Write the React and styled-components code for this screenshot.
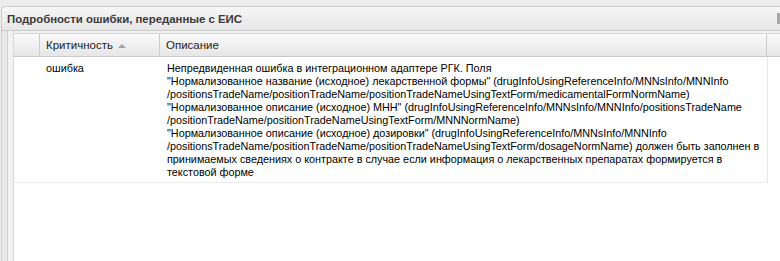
import React from "react";
import styled, { createGlobalStyle } from "styled-components";

const Global = createGlobalStyle`
  html, body { margin: 0; padding: 0; background: #ffffff; }
  body { font-family: "Liberation Sans", Arial, sans-serif; }
  #root { width: 780px; height: 261px; overflow: hidden; }
`;

const Page = styled.div`
  width: 780px;
  height: 261px;
  display: flex;
  flex-direction: column;
  background: #efefef;
  overflow: hidden;
`;

const TopStrip = styled.div`
  height: 6px;
  flex: none;
  background: #ececec;
`;

const Panel = styled.div`
  flex: 1;
  display: flex;
  flex-direction: column;
  margin-left: 1px;
  min-height: 0;
`;

const PanelHeader = styled.div`
  height: 23px;
  flex: none;
  display: flex;
  align-items: center;
  border: 1px solid #c9c9c9;
  border-right: none;
  border-top-left-radius: 4px;
  background: linear-gradient(#f6f6f6, #ededed 55%, #e7e7e7);
  padding-left: 5px;
`;

const Title = styled.div`
  flex: 1;
  font-size: 11.4px;
  font-weight: bold;
  color: #3a3a3a;
  white-space: nowrap;
`;

const Tool = styled.div`
  width: 3px;
  height: 11px;
  background: #a6a6a6;
  flex: none;
`;

const Body = styled.div`
  flex: 1;
  display: flex;
  min-height: 0;
  border-left: 1px solid #cfcfcf;
  background: #f3f3f3;
`;

const Gutter = styled.div`
  width: 12px;
  flex: none;
  display: flex;
`;

const GutterStrip = styled.div`
  width: ${(p) => p.$w}px;
  background: ${(p) => p.$bg};
  border-right: 1px solid ${(p) => p.$line};
`;

const Grid = styled.div`
  flex: 1;
  margin-top: 2px;
  background: #ffffff;
  display: flex;
  flex-direction: column;
  font-size: 10.8px;
`;

const HeaderRow = styled.div`
  display: flex;
  height: 22px;
  border-top: 1px solid #d4d4d4;
  border-bottom: 1px solid #c9c9c9;
  background: linear-gradient(#fafafa, #f0f0f0 50%, #e6e6e6);
`;

const HeaderCell = styled.div`
  width: ${(p) => p.$w}px;
  flex: ${(p) => (p.$fill ? 1 : "none")};
  display: flex;
  align-items: center;
  padding-left: ${(p) => p.$pl || 0}px;
  box-sizing: border-box;
  border-right: ${(p) => (p.$fill ? "none" : "1px solid #cbcbcb")};
  color: #222;
  font-size: 11.5px;
  white-space: nowrap;
`;

const SortArrow = styled.span`
  display: inline-block;
  width: 0;
  height: 0;
  margin-left: 5px;
  margin-top: 1px;
  border-left: 4px solid transparent;
  border-right: 4px solid transparent;
  border-bottom: 4px solid #a3a3a3;
`;

const DataRow = styled.div`
  display: flex;
  width: 754px;
  border-bottom: 1px solid #ebebeb;
  border-right: 1px solid #e6e6e6;
  box-sizing: border-box;
`;

const Cell = styled.div`
  width: ${(p) => p.$w}px;
  flex: none;
  box-sizing: border-box;
  padding: 5px 0 3px ${(p) => p.$pl || 0}px;
  line-height: 13px;
  color: #000;
  white-space: nowrap;
`;

const lines = [
  "Непредвиденная ошибка в интеграционном адаптере РГК. Поля",
  "\"Нормализованное название (исходное) лекарственной формы\" (drugInfoUsingReferenceInfo/MNNsInfo/MNNInfo",
  "/positionsTradeName/positionTradeName/positionTradeNameUsingTextForm/medicamentalFormNormName)",
  "\"Нормализованное описание (исходное) МНН\" (drugInfoUsingReferenceInfo/MNNsInfo/MNNInfo/positionsTradeName",
  "/positionTradeName/positionTradeNameUsingTextForm/MNNNormName)",
  "\"Нормализованное описание (исходное) дозировки\" (drugInfoUsingReferenceInfo/MNNsInfo/MNNInfo",
  "/positionsTradeName/positionTradeName/positionTradeNameUsingTextForm/dosageNormName) должен быть заполнен в",
  "принимаемых сведениях о контракте в случае если информация о лекарственных препаратах формируется в",
  "текстовой форме",
];

export default function App() {
  return (
    <>
      <Global />
      <Page>
        <TopStrip />
        <Panel>
          <PanelHeader>
            <Title>Подробности ошибки, переданные с ЕИС</Title>
            <Tool />
          </PanelHeader>
          <Body>
            <Gutter>
              <GutterStrip $w={5} $bg="#e9e9e9" $line="#d2d2d2" />
              <GutterStrip $w={5} $bg="#f2f2f2" $line="#d6d6d6" />
            </Gutter>
            <Grid>
              <HeaderRow>
                <HeaderCell $w={26} />
                <HeaderCell $w={120} $pl={6}>
                  Критичность
                  <SortArrow />
                </HeaderCell>
                <HeaderCell $w={607} $pl={6}>
                  Описание
                </HeaderCell>
                <HeaderCell $fill />
              </HeaderRow>
              <DataRow>
                <Cell $w={26} />
                <Cell $w={120} $pl={6}>
                  ошибка
                </Cell>
                <Cell $w={607} $pl={7}>
                  {lines.map((l, i) => (
                    <div key={i}>{l}</div>
                  ))}
                </Cell>
              </DataRow>
            </Grid>
          </Body>
        </Panel>
      </Page>
    </>
  );
}
